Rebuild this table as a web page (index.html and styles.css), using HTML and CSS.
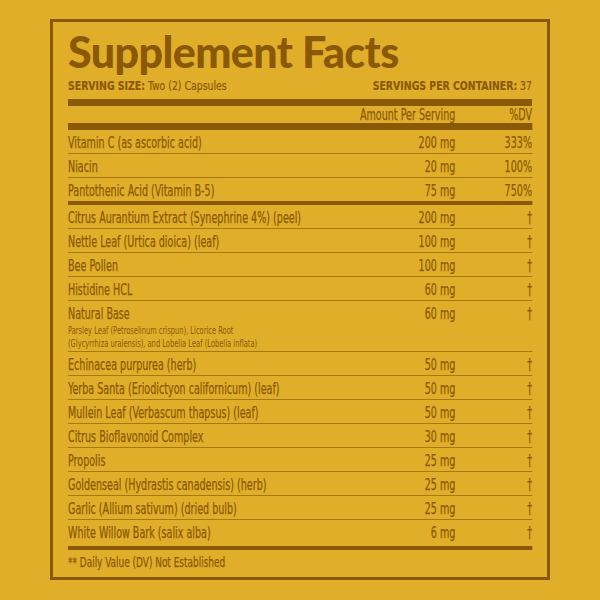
FILE: index.html
```html
<!DOCTYPE html>
<html lang="en">
<head>
    <meta charset="UTF-8">
    <meta name="viewport" content="width=device-width, initial-scale=1.0">
    <title>Supplement Facts</title>
    <link rel="stylesheet" href="styles.css">
</head>
<body>
	<div class="label">
		<h1 class="title">Supplement Facts</h1>
		<div class="serving">
			<span><b>SERVING SIZE:</b> Two (2) Capsules</span>
			<span><b>SERVINGS PER CONTAINER:</b> 37</span>
		</div>
		<div class="bar bar-xl"></div>

		<div class="facts">
			<div class="row head">
				<span></span><span class="amt">Amount Per Serving</span><span class="dv">%DV</span>
			</div>
			<div class="bar bar-lg"></div>

			<div class="row"><span>Vitamin C (as ascorbic acid)</span><span class="amt">200 mg</span><span class="dv">333%</span></div>
			<div class="row"><span>Niacin</span><span class="amt">20 mg</span><span class="dv">100%</span></div>
			<div class="row last"><span>Pantothenic Acid (Vitamin B-5)</span><span class="amt">75 mg</span><span class="dv">750%</span></div>
			<div class="bar bar-md"></div>

			<div class="row"><span>Citrus Aurantium Extract (Synephrine 4%) (peel)</span><span class="amt">200 mg</span><span class="dv">&dagger;</span></div>
			<div class="row"><span>Nettle Leaf (Urtica dioica) (leaf)</span><span class="amt">100 mg</span><span class="dv">&dagger;</span></div>
			<div class="row"><span>Bee Pollen</span><span class="amt">100 mg</span><span class="dv">&dagger;</span></div>
			<div class="row"><span>Histidine HCL</span><span class="amt">60 mg</span><span class="dv">&dagger;</span></div>
			<div class="row">
				<span>Natural Base
					<small class="sub">Parsley Leaf (Petroselinum crispun), Licorice Root<br>(Glycyrrhiza uralensis), and Lobelia Leaf (Lobelia inflata)</small>
				</span>
				<span class="amt">60 mg</span><span class="dv">&dagger;</span>
			</div>
			<div class="row"><span>Echinacea purpurea (herb)</span><span class="amt">50 mg</span><span class="dv">&dagger;</span></div>
			<div class="row"><span>Yerba Santa (Eriodictyon californicum) (leaf)</span><span class="amt">50 mg</span><span class="dv">&dagger;</span></div>
			<div class="row"><span>Mullein Leaf (Verbascum thapsus) (leaf)</span><span class="amt">50 mg</span><span class="dv">&dagger;</span></div>
			<div class="row"><span>Citrus Bioflavonoid Complex</span><span class="amt">30 mg</span><span class="dv">&dagger;</span></div>
			<div class="row"><span>Propolis</span><span class="amt">25 mg</span><span class="dv">&dagger;</span></div>
			<div class="row"><span>Goldenseal (Hydrastis canadensis) (herb)</span><span class="amt">25 mg</span><span class="dv">&dagger;</span></div>
			<div class="row"><span>Garlic (Allium sativum) (dried bulb)</span><span class="amt">25 mg</span><span class="dv">&dagger;</span></div>
			<div class="row last"><span>White Willow Bark (salix alba)</span><span class="amt">6 mg</span><span class="dv">&dagger;</span></div>
			<div class="bar bar-md bar-end"></div>

			<p class="note">** Daily Value (DV) Not Established</p>
		</div>
	</div>
</body>
</html>
```

FILE: styles.css
```css
body { margin: 0; background: #e1ae2a; color: #8a5905; font-family: "DejaVu Sans Condensed", "DejaVu Sans", sans-serif; font-stretch: condensed; }

.label { margin: 19px 50px 0; height: 561px; box-sizing: border-box; border: 3px solid #8a5905; padding: 0 15px; }

.title { margin: 0; padding-top: 4px; font-family: Lato, "DejaVu Sans", sans-serif; font-weight: 900; font-size: 43px; line-height: 52px; letter-spacing: -0.6px; }

/* the label face is a narrow one, so squeeze the text blocks sideways */
.serving { display: flex; justify-content: space-between; width: calc(100% / 0.8); transform: scaleX(0.8); transform-origin: left top; font-size: 13px; line-height: 16px; -webkit-text-stroke: 0.2px #8a5905; }
.facts { width: calc(100% / 0.71); transform: scaleX(0.71); transform-origin: left top; -webkit-text-stroke: 0.25px #8a5905; }

.bar { background: #8a5905; }
.bar-xl { height: 7px; margin-top: 5px; }
.bar-lg { height: 7px; }
.bar-md { height: 4px; }
.bar-end { margin-top: 3px; }

.row { display: grid; grid-template-columns: 1fr 180px 108px; font-size: 15px; line-height: 19px; padding-top: 4px; border-bottom: 1px solid #a8770f; white-space: nowrap; }
.row.last { border-bottom: none; }
.row .amt { text-align: right; }
.row .dv { text-align: right; }

.head { padding-top: 2px; line-height: 15px; border-bottom: none; }

.sub { display: block; font-size: 10.5px; line-height: 13px; padding-bottom: 1px; -webkit-text-stroke: 0; }

.note { margin: 3px 0 0; font-size: 14px; line-height: 18px; }
```
